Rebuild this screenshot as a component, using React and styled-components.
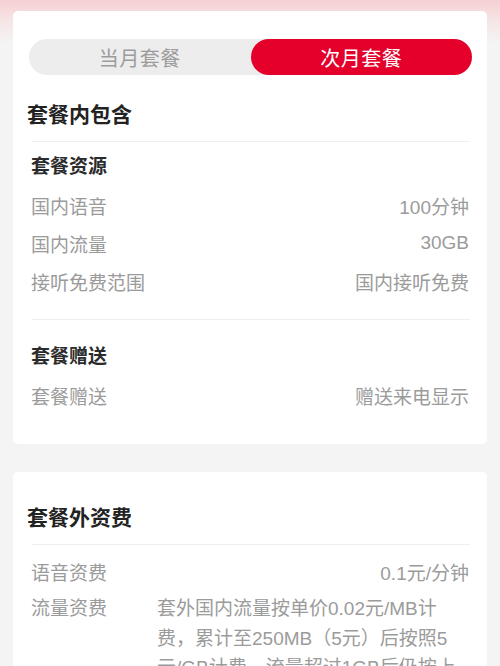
import styled, { createGlobalStyle } from "styled-components";

const GlobalStyle = createGlobalStyle`
  html, body {
    margin: 0;
    padding: 0;
    background: #f4f4f4;
  }
  body {
    font-family: "Liberation Sans", "Noto Sans CJK SC", sans-serif;
    -webkit-font-smoothing: antialiased;
  }
`;

const Page = styled.div`
  min-height: 666px;
  padding: 11px 13px 0;
  box-sizing: border-box;
  background: linear-gradient(180deg, #f6cfd2 0px, #f6e6e7 22px, #f4f4f4 44px, #f4f4f4 100%);
  display: flex;
  flex-direction: column;
  gap: 28px;
`;

const Card = styled.div`
  background: #fff;
  border-radius: 5px;
  padding: ${(p) => p.$pad || "0 0 30px"};
`;

const Tabs = styled.div`
  margin: 0 15px 0 16px;
  height: 36px;
  border-radius: 18px;
  background: #ededed;
  display: grid;
  grid-template-columns: 1fr 1fr;
`;

const Tab = styled.div`
  display: flex;
  align-items: center;
  justify-content: center;
  border-radius: 18px;
  font-size: 20px;
  letter-spacing: 0.5px;
  color: ${(p) => (p.$active ? "#fff" : "#9c9c9c")};
  background: ${(p) => (p.$active ? "#e4002b" : "transparent")};
`;

const Title = styled.div`
  padding: ${(p) => p.$top || "20px"} 0 ${(p) => p.$bottom || "6px"} 14px;
  line-height: 40px;
  font-size: 21px;
  font-weight: 700;
  color: #222;
`;

const Divider = styled.div`
  height: 1px;
  margin: 0 17px 0 19px;
  background: #efefef;
`;

const Section = styled.div`
  padding: ${(p) => p.$top}px 18px ${(p) => p.$bottom}px;
`;

const SubTitle = styled.div`
  line-height: 38px;
  font-size: 19px;
  font-weight: 700;
  color: #2b2b2b;
`;

const Row = styled.div`
  display: flex;
  justify-content: space-between;
  align-items: center;
  height: 38px;
  font-size: 19px;
  color: #9b9b9b;
`;

const WideRow = styled.div`
  display: grid;
  grid-template-columns: 126px 300px;
  padding-top: 4px;
  font-size: 19px;
  line-height: 29.5px;
  color: #9b9b9b;
`;

export default function App() {
  return (
    <>
      <GlobalStyle />
      <Page>
        <Card $pad="28px 0 30px">
          <Tabs>
            <Tab>当月套餐</Tab>
            <Tab $active>次月套餐</Tab>
          </Tabs>
          <Title>套餐内包含</Title>
          <Divider />
          <Section $top={6} $bottom={19}>
            <SubTitle>套餐资源</SubTitle>
            <Row>
              <span>国内语音</span>
              <span>100分钟</span>
            </Row>
            <Row>
              <span>国内流量</span>
              <span>30GB</span>
            </Row>
            <Row>
              <span>接听免费范围</span>
              <span>国内接听免费</span>
            </Row>
          </Section>
          <Divider />
          <Section $top={18} $bottom={0}>
            <SubTitle>套餐赠送</SubTitle>
            <Row>
              <span>套餐赠送</span>
              <span>赠送来电显示</span>
            </Row>
          </Section>
        </Card>
        <Card $pad="0 0 30px">
          <Title $top="26px">套餐外资费</Title>
          <Divider />
          <Section $top={7} $bottom={0}>
            <Row>
              <span>语音资费</span>
              <span>0.1元/分钟</span>
            </Row>
            <WideRow>
              <span>流量资费</span>
              <div>
                套外国内流量按单价0.02元/MB计费，累计至250MB（5元）后按照5元/GB计费，流量超过1GB后仍按上述规则计费。
              </div>
            </WideRow>
          </Section>
        </Card>
      </Page>
    </>
  );
}
